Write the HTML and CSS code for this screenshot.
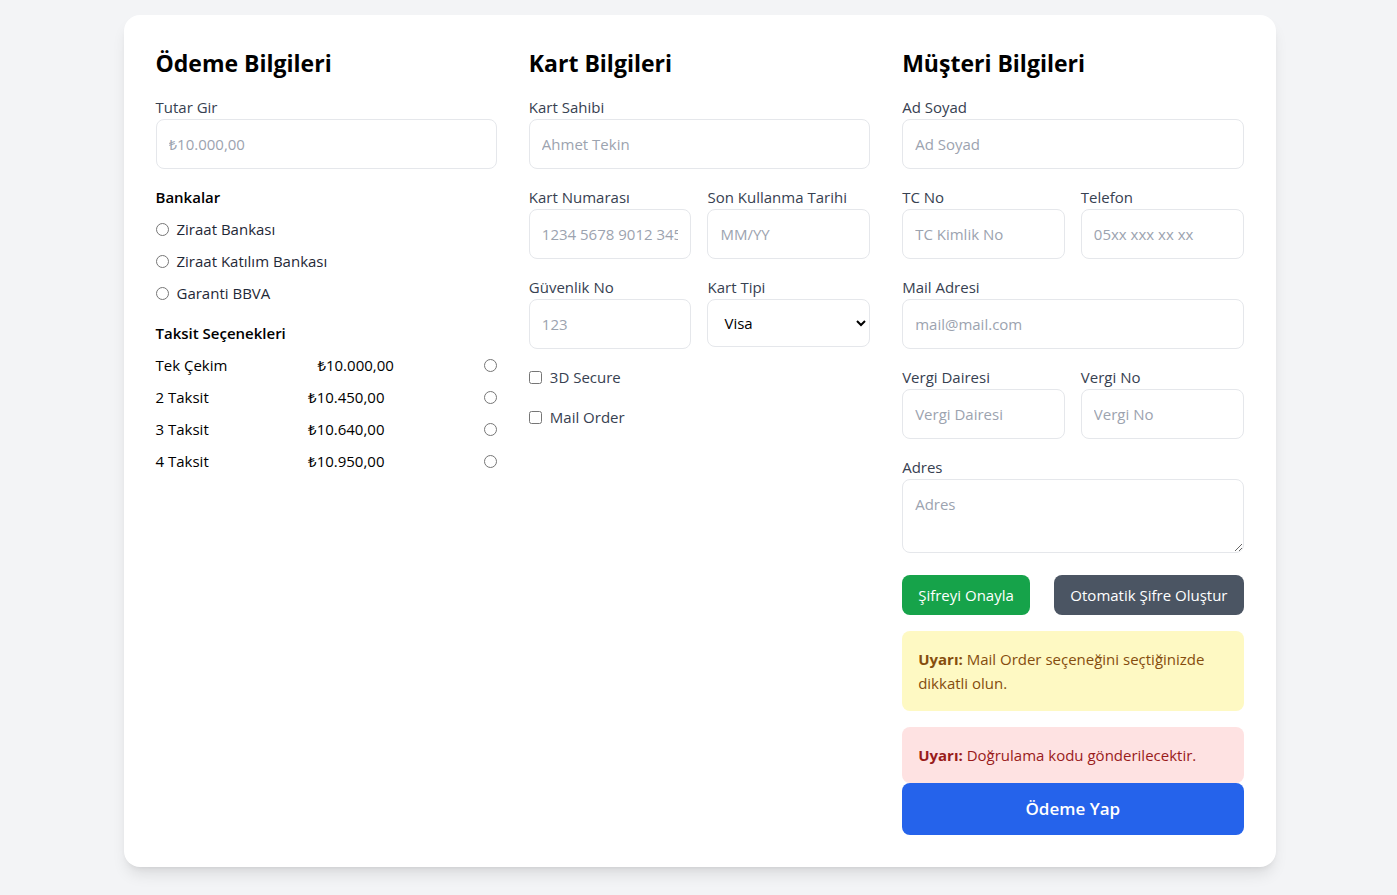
FILE: index.html
```html
<!DOCTYPE html>
<html lang="tr">
<head>
    <meta charset="UTF-8">
    <meta name="viewport" content="width=device-width, initial-scale=1.0">
    <title>Ödeme</title>
    <link rel="stylesheet" href="styles.css">
</head>
<body>
    <div class="card">
        <div class="columns">
            <!-- Ödeme -->
            <section class="column">
                <h2>Ödeme Bilgileri</h2>
                <div class="field">
                    <label class="label">Tutar Gir</label>
                    <input type="text" class="input" placeholder="₺10.000,00">
                </div>

                <div class="group">
                    <h3 class="group-title">Bankalar</h3>
                    <label class="choice"><input type="radio" name="bank"> Ziraat Bankası</label>
                    <label class="choice"><input type="radio" name="bank"> Ziraat Katılım Bankası</label>
                    <label class="choice"><input type="radio" name="bank"> Garanti BBVA</label>
                </div>

                <div class="group">
                    <h3 class="group-title">Taksit Seçenekleri</h3>
                    <div class="installment">
                        <span>Tek Çekim</span>
                        <span>₺10.000,00</span>
                        <input type="radio" name="taksit">
                    </div>
                    <div class="installment">
                        <span>2 Taksit</span>
                        <span>₺10.450,00</span>
                        <input type="radio" name="taksit">
                    </div>
                    <div class="installment">
                        <span>3 Taksit</span>
                        <span>₺10.640,00</span>
                        <input type="radio" name="taksit">
                    </div>
                    <div class="installment">
                        <span>4 Taksit</span>
                        <span>₺10.950,00</span>
                        <input type="radio" name="taksit">
                    </div>
                </div>
            </section>

            <!-- Kart -->
            <section class="column">
                <h2>Kart Bilgileri</h2>
                <div class="field">
                    <label class="label">Kart Sahibi</label>
                    <input type="text" class="input" placeholder="Ahmet Tekin">
                </div>
                <div class="row">
                    <div class="field">
                        <label class="label">Kart Numarası</label>
                        <input type="text" class="input" placeholder="1234 5678 9012 3456">
                    </div>
                    <div class="field">
                        <label class="label">Son Kullanma Tarihi</label>
                        <input type="text" class="input" placeholder="MM/YY">
                    </div>
                </div>
                <div class="row">
                    <div class="field">
                        <label class="label">Güvenlik No</label>
                        <input type="text" class="input" placeholder="123">
                    </div>
                    <div class="field">
                        <label class="label">Kart Tipi</label>
                        <select class="input select">
                            <option>Visa</option>
                            <option>MasterCard</option>
                            <option>Troy</option>
                        </select>
                    </div>
                </div>
                <label class="check"><input type="checkbox"> 3D Secure</label>
                <label class="check"><input type="checkbox"> Mail Order</label>
            </section>

            <!-- Müşteri -->
            <section class="column">
                <h2>Müşteri Bilgileri</h2>
                <div class="field">
                    <label class="label">Ad Soyad</label>
                    <input type="text" class="input" placeholder="Ad Soyad">
                </div>
                <div class="row">
                    <div class="field">
                        <label class="label">TC No</label>
                        <input type="text" class="input" placeholder="TC Kimlik No">
                    </div>
                    <div class="field">
                        <label class="label">Telefon</label>
                        <input type="text" class="input" placeholder="05xx xxx xx xx">
                    </div>
                </div>
                <div class="field">
                    <label class="label">Mail Adresi</label>
                    <input type="email" class="input" placeholder="mail@mail.com">
                </div>
                <div class="row">
                    <div class="field">
                        <label class="label">Vergi Dairesi</label>
                        <input type="text" class="input" placeholder="Vergi Dairesi">
                    </div>
                    <div class="field">
                        <label class="label">Vergi No</label>
                        <input type="text" class="input" placeholder="Vergi No">
                    </div>
                </div>
                <div class="field field-area">
                    <label class="label">Adres</label>
                    <textarea class="input textarea" rows="2" placeholder="Adres"></textarea>
                </div>

                <div class="actions">
                    <button class="btn btn-green">Şifreyi Onayla</button>
                    <button class="btn btn-gray">Otomatik Şifre Oluştur</button>
                </div>

                <div class="alert alert-yellow">
                    <strong>Uyarı:</strong> Mail Order seçeneğini seçtiğinizde dikkatli olun.
                </div>
                <div class="alert alert-red">
                    <strong>Uyarı:</strong> Doğrulama kodu gönderilecektir.
                </div>
                <button class="pay-button">Ödeme Yap</button>
            </section>
        </div>
    </div>
</body>
</html>
```

FILE: styles.css
```css
* {
    margin: 0;
    padding: 0;
    box-sizing: border-box;
}

:root {
    --page: #f3f4f6;
    --border: #e5e7eb;
    --label: #374151;
    --placeholder: #9ca3af;
}

body {
    background: var(--page);
    font-family: "Open Sans", "Noto Sans", sans-serif;
    font-size: 15px;
    line-height: 24px;
    color: #111827;
    padding: 15px 0 0 2px;
    min-height: 100vh;
}

.card {
    width: 1152px;
    margin: 0 auto;
    background: #fff;
    border-radius: 16px;
    box-shadow: 0 10px 15px -3px rgba(0, 0, 0, 0.1), 0 4px 6px -4px rgba(0, 0, 0, 0.1);
    padding: 32px;
}

.columns {
    display: grid;
    grid-template-columns: repeat(3, 1fr);
    gap: 32px;
}

.column {
    display: flex;
    flex-direction: column;
}

h2 {
    font-size: 23px;
    line-height: 32px;
    font-weight: 700;
    color: #000;
    margin-bottom: 16px;
}

.field {
    margin-bottom: 16px;
}

.label {
    display: block;
    color: var(--label);
}

.input {
    display: block;
    width: 100%;
    padding: 12px;
    border: 1px solid var(--border);
    border-radius: 8px;
    font: inherit;
    color: #111827;
    background: #fff;
    outline: none;
}

.input::placeholder {
    color: var(--placeholder);
}

.select {
    height: 48px;
    padding: 0 8px 0 12px;
    color: #000;
}

.textarea {
    resize: vertical;
    height: 74px;
}

.field-area {
    margin-bottom: 22px;
}

.row {
    display: grid;
    grid-template-columns: 1fr 1fr;
    gap: 16px;
}

.group {
    margin-bottom: 16px;
    display: flex;
    flex-direction: column;
    gap: 8px;
}

.group-title {
    font-size: 15px;
    font-weight: 600;
    color: #000;
}

.choice {
    display: flex;
    align-items: center;
    gap: 8px;
    color: #1f2937;
}

.choice input,
.installment input,
.check input {
    width: 13px;
    height: 13px;
    margin: 0;
}

.installment {
    display: flex;
    justify-content: space-between;
    align-items: center;
    color: #000;
}

.check {
    display: flex;
    align-items: center;
    gap: 8px;
    color: var(--label);
    margin-bottom: 16px;
}

.actions {
    display: flex;
    justify-content: space-between;
    margin-bottom: 16px;
}

.btn {
    border: none;
    border-radius: 8px;
    padding: 8px 16px;
    font: inherit;
    color: #fff;
    cursor: pointer;
}

.btn-green {
    background: #16a34a;
}

.btn-gray {
    background: #4b5563;
}

.alert {
    padding: 16px;
    border-radius: 8px;
    margin-bottom: 16px;
}

.alert-yellow {
    background: #fef9c3;
    color: #854d0e;
}

.alert-red {
    background: #fee2e2;
    color: #991b1b;
    margin-bottom: 0;
}

.pay-button {
    width: 100%;
    background: #2563eb;
    color: #fff;
    border: none;
    border-radius: 8px;
    padding: 12px;
    font: inherit;
    font-size: 17px;
    line-height: 28px;
    font-weight: 600;
    cursor: pointer;
}
```
